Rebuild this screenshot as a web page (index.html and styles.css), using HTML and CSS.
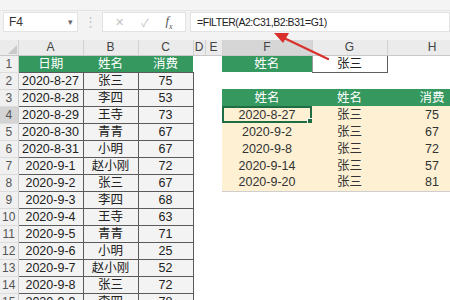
FILE: index.html
```html
<!DOCTYPE html>
<html lang="zh-CN">

<head>
    <title>FILTER</title>
    <link rel="stylesheet" href="styles.css">
</head>

<body>
    <div class="ribbon-edge"></div>
    <div class="formula-bar">
        <div class="name-box">F4<span class="drop">&#9662;</span></div>
        <div class="dots">&#8942;</div>
        <div class="func-box">
            <span class="x">&#10005;</span>
            <span class="ok">&#10003;</span>
            <span class="fx">f<sub>x</sub></span>
        </div>
        <div class="formula">=FILTER(A2:C31,B2:B31=G1)</div>
    </div>

    <table class="sheet">
        <colgroup>
            <col style="width:18px">
            <col style="width:65px">
            <col style="width:55px">
            <col style="width:55px">
            <col style="width:12px">
            <col style="width:17px">
            <col style="width:90px">
            <col style="width:75px">
            <col style="width:90px">
        </colgroup>
        <tr class="head-row">
            <td class="corner"><svg width="9" height="9" viewBox="0 0 9 9"><polygon points="9,0 9,9 0,9" fill="#c9c9c9"/></svg></td>
            <td class="ch">A</td><td class="ch">B</td><td class="ch">C</td><td class="ch">D</td><td class="ch">E</td>
            <td class="ch cur">F</td><td class="ch">G</td><td class="ch">H</td>
        </tr>
        <tr>
            <td class="rh">1</td>
            <td class="hd">日期</td><td class="hd">姓名</td><td class="hd">消费</td>
            <td></td><td></td>
            <td class="hd">姓名</td><td class="crit">张三</td><td></td>
        </tr>
        <tr>
            <td class="rh">2</td>
            <td class="c">2020-8-27</td><td class="c">张三</td><td class="c">75</td>
            <td></td><td></td><td></td><td></td><td></td>
        </tr>
        <tr>
            <td class="rh">3</td>
            <td class="c">2020-8-28</td><td class="c">李四</td><td class="c">53</td>
            <td></td><td></td>
            <td class="hd">姓名</td><td class="hd">姓名</td><td class="hd">消费</td>
        </tr>
        <tr>
            <td class="rh cur">4</td>
            <td class="c">2020-8-29</td><td class="c">王寺</td><td class="c">73</td>
            <td></td><td></td>
            <td class="r sel">2020-8-27</td><td class="r">张三</td><td class="r">75</td>
        </tr>
        <tr>
            <td class="rh">5</td>
            <td class="c">2020-8-30</td><td class="c">青青</td><td class="c">67</td>
            <td></td><td></td>
            <td class="r">2020-9-2</td><td class="r">张三</td><td class="r">67</td>
        </tr>
        <tr>
            <td class="rh">6</td>
            <td class="c">2020-8-31</td><td class="c">小明</td><td class="c">67</td>
            <td></td><td></td>
            <td class="r">2020-9-8</td><td class="r">张三</td><td class="r">72</td>
        </tr>
        <tr>
            <td class="rh">7</td>
            <td class="c">2020-9-1</td><td class="c">赵小刚</td><td class="c">72</td>
            <td></td><td></td>
            <td class="r">2020-9-14</td><td class="r">张三</td><td class="r">57</td>
        </tr>
        <tr>
            <td class="rh">8</td>
            <td class="c">2020-9-2</td><td class="c">张三</td><td class="c">67</td>
            <td></td><td></td>
            <td class="r last">2020-9-20</td><td class="r last">张三</td><td class="r last">81</td>
        </tr>
        <tr>
            <td class="rh">9</td>
            <td class="c">2020-9-3</td><td class="c">李四</td><td class="c">68</td>
            <td></td><td></td><td></td><td></td><td></td>
        </tr>
        <tr>
            <td class="rh">10</td>
            <td class="c">2020-9-4</td><td class="c">王寺</td><td class="c">63</td>
            <td></td><td></td><td></td><td></td><td></td>
        </tr>
        <tr>
            <td class="rh">11</td>
            <td class="c">2020-9-5</td><td class="c">青青</td><td class="c">71</td>
            <td></td><td></td><td></td><td></td><td></td>
        </tr>
        <tr>
            <td class="rh">12</td>
            <td class="c">2020-9-6</td><td class="c">小明</td><td class="c">25</td>
            <td></td><td></td><td></td><td></td><td></td>
        </tr>
        <tr>
            <td class="rh">13</td>
            <td class="c">2020-9-7</td><td class="c">赵小刚</td><td class="c">52</td>
            <td></td><td></td><td></td><td></td><td></td>
        </tr>
        <tr>
            <td class="rh">14</td>
            <td class="c">2020-9-8</td><td class="c">张三</td><td class="c">72</td>
            <td></td><td></td><td></td><td></td><td></td>
        </tr>
        <tr>
            <td class="rh">15</td>
            <td class="c">2020-9-9</td><td class="c">李四</td><td class="c">78</td>
            <td></td><td></td><td></td><td></td><td></td>
        </tr>
    </table>

    <svg class="arrow" width="450" height="300" viewBox="0 0 450 300">
        <line x1="328" y1="59" x2="284" y2="38" stroke="#d9302c" stroke-width="2.2" stroke-linecap="round"/>
        <polygon points="274,33 289,33 283,43" fill="#d9302c"/>
    </svg>
</body>

</html>
```

FILE: styles.css
```css
body {
    margin: 0;
    width: 450px;
    height: 300px;
    overflow: hidden;
    position: relative;
    background: #fff;
    font-family: "Liberation Sans", "Noto Sans CJK SC", sans-serif;
    color: #333;
}

.ribbon-edge {
    height: 10px;
    background: #f4f4f4;
    border-bottom: 1px solid #e4e4e4;
}

.formula-bar {
    display: flex;
    align-items: flex-start;
    height: 29px;
    padding: 1px 0 0 3px;
    box-sizing: border-box;
    background: #f3f3f3;
}

.name-box, .func-box, .formula {
    height: 20px;
    background: #fff;
    border: 1px solid #e2e2e2;
    box-sizing: border-box;
    display: flex;
    align-items: center;
}

.name-box {
    width: 75px;
    padding: 0 4px 0 5px;
    font-size: 12px;
    justify-content: space-between;
}

.drop {
    font-size: 9px;
    color: #666;
}

.dots {
    width: 24px;
    text-align: center;
    color: #c4c4c4;
    font-size: 13px;
    line-height: 20px;
}

.func-box {
    width: 84px;
    justify-content: space-around;
    padding: 0 4px;
    color: #c2c2c2;
    font-size: 11px;
}

.fx {
    font-family: "Liberation Serif", serif;
    font-style: italic;
    color: #555;
    font-size: 13px;
}

.fx sub {
    font-size: 8px;
}

.formula {
    flex: 1;
    margin-left: 4px;
    padding-left: 6px;
    font-size: 10.5px;
    letter-spacing: -0.45px;
    color: #222;
}

.sheet {
    table-layout: fixed;
    border-collapse: collapse;
    width: 477px;
    font-size: 12px;
}

.sheet td {
    height: 17px;
    padding: 0;
    text-align: center;
    line-height: 16px;
    white-space: nowrap;
    overflow: hidden;
    box-sizing: border-box;
}

.head-row td {
    height: 15px;
    line-height: 14px;
}

.corner {
    background: #ebebeb;
    border-right: 1px solid #d2d2d2;
    border-bottom: 1px solid #c8c8c8;
    text-align: right !important;
    vertical-align: bottom;
}

.corner svg {
    display: block;
    margin: 0 1px 1px auto;
}

.ch {
    background: #ebebeb;
    color: #444;
    border-right: 1px solid #d2d2d2;
    border-bottom: 1px solid #c8c8c8;
}

.ch.cur {
    background: #d6d6d6;
}

.rh {
    background: #f0f0f0;
    color: #555;
    border-right: 1px solid #c8c8c8;
    border-bottom: 1px solid #dcdcdc;
}

.rh.cur {
    background: #d4d4d4;
}

.hd {
    background: #35985f;
    color: #fff;
    font-size: 12.5px;
}

.c {
    background: #f3f3f3;
    border: 1px solid #5a5a5a;
    color: #222;
    font-size: 12.5px;
}

.crit {
    background: #fff;
    border: 1px solid #9a9a9a;
    border-right-color: #5f5f5f;
    border-bottom-color: #5f5f5f;
    color: #222;
    font-size: 12.5px;
}

.r {
    background: #fdf0d3;
    color: #333;
    font-size: 12.5px;
}

.r.last {
    border-bottom: 1px solid #cfcfcf;
}

.sel {
    position: relative;
    box-shadow: inset 0 0 0 2px #1f6e43;
}

.sel::after {
    content: "";
    position: absolute;
    right: -1px;
    bottom: -1px;
    width: 4px;
    height: 4px;
    background: #1f6e43;
    border: 1px solid #fff;
}

.arrow {
    position: absolute;
    left: 0;
    top: 0;
    pointer-events: none;
}
```
